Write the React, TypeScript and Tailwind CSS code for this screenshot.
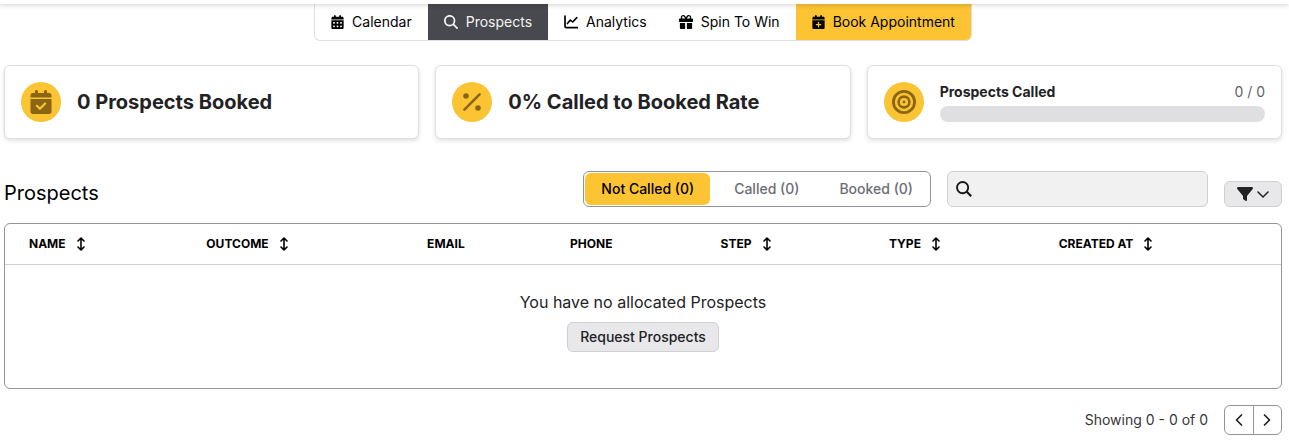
import { useState } from "react";
import clsx from "clsx";
import {
  FaCalendarCheck,
  FaCalendarDays,
  FaCalendarPlus,
  FaFilter,
  FaGift,
  FaMagnifyingGlass,
} from "react-icons/fa6";

const ChartIcon = () => (
  <svg viewBox="0 0 14 14" className="size-3.5" fill="none" stroke="currentColor">
    <path
      d="M1 1v10.2c0 .9.5 1.4 1.4 1.4h11.2"
      strokeWidth="1.7"
      strokeLinecap="round"
    />
    <path
      d="M3.4 8.6 6.4 5l2.3 2L12.8 2.6"
      strokeWidth="1.6"
      strokeLinecap="round"
      strokeLinejoin="round"
    />
  </svg>
);

const PercentIcon = () => (
  <svg viewBox="0 0 24 24" className="size-6" fill="currentColor">
    <path d="M4.4 19.6 19.6 4.4" stroke="currentColor" strokeWidth="2.6" strokeLinecap="round" />
    <circle cx="6" cy="6" r="2.8" />
    <circle cx="18" cy="18" r="2.8" />
  </svg>
);

const TargetIcon = () => (
  <svg viewBox="0 0 24 24" className="size-6" fill="none" stroke="currentColor" strokeWidth="2.8">
    <circle cx="12" cy="12" r="10.6" />
    <circle cx="12" cy="12" r="5.4" strokeWidth="2.6" />
    <circle cx="12" cy="12" r="1.4" fill="currentColor" stroke="none" />
  </svg>
);

const SortIcon = () => (
  <svg viewBox="0 0 8 14" className="h-3.5 w-2" fill="none" stroke="currentColor" strokeWidth="1.6">
    <path
      d="M4 1.2v11.6M1 4l3-3 3 3M1 10l3 3 3-3"
      strokeLinecap="round"
      strokeLinejoin="round"
    />
  </svg>
);

const SearchIcon = () => (
  <svg
    viewBox="0 0 16 16"
    className="size-4 shrink-0"
    fill="none"
    stroke="currentColor"
    strokeWidth="1.9"
  >
    <circle cx="6.6" cy="6.6" r="5.6" />
    <path d="m10.8 10.8 4.4 4.4" strokeWidth="2.2" />
  </svg>
);

const Chevron = ({ d, className }: { d: string; className: string }) => (
  <svg viewBox="0 0 12 12" className={className} fill="none" stroke="currentColor">
    <path d={d} strokeLinecap="round" strokeLinejoin="round" />
  </svg>
);

const navItems = [
  { label: "Calendar", icon: <FaCalendarDays className="w-[13px]" />, style: "" },
  { label: "Prospects", icon: <FaMagnifyingGlass />, style: "bg-[#48484f] text-[#f4f4f5]" },
  { label: "Analytics", icon: <ChartIcon />, style: "" },
  { label: "Spin To Win", icon: <FaGift />, style: "" },
  {
    label: "Book Appointment",
    icon: <FaCalendarPlus className="w-[13px]" />,
    style: "bg-[#fcc433]",
  },
];

const tabs = ["Not Called", "Called", "Booked"];

const columns = [
  { label: "Name", sortable: true, width: "w-[13.9%]" },
  { label: "Outcome", sortable: true, width: "w-[17.3%]" },
  { label: "Email", sortable: false, width: "w-[11.2%]" },
  { label: "Phone", sortable: false, width: "w-[11.8%]" },
  { label: "Step", sortable: true, width: "w-[13.2%]" },
  { label: "Type", sortable: true, width: "w-[13.3%]" },
  { label: "Created At", sortable: true, width: "w-[19.3%]" },
];

const StatCard = ({
  icon,
  children,
}: {
  icon: React.ReactNode;
  children: React.ReactNode;
}) => (
  <div className="flex flex-1 items-center gap-4 rounded-md border border-[#dfdfe2] bg-white p-4 shadow-[0_2px_4px_rgba(0,0,0,0.12)]">
    <div className="flex size-10 shrink-0 items-center justify-center rounded-full bg-[#fcc433] text-[#8a6614]">
      {icon}
    </div>
    {children}
  </div>
);

export default function App() {
  const [activeTab, setActiveTab] = useState("Not Called");
  const [search, setSearch] = useState("");

  return (
    <div className="bg-white font-['Inter',sans-serif] text-black">
      <header className="relative h-1 bg-white shadow-[0_1px_5px_rgba(0,0,0,0.2)]" />
      <nav className="flex justify-center pr-[7px] pl-1">
        <div className="flex overflow-hidden rounded-b-md border border-t-0 border-[#dfdfe2]">
          {navItems.map((item) => (
            <a
              key={item.label}
              href="#"
              className={clsx("flex items-center gap-2 px-4 py-2 text-sm", item.style)}
            >
              {item.icon}
              {item.label}
            </a>
          ))}
        </div>
      </nav>

      <main className="pt-6 pr-[7px] pb-1.5 pl-1">
        <section className="flex gap-4">
          <StatCard icon={<FaCalendarCheck className="size-6" />}>
            <p className="text-xl font-bold text-[#222225]">0 Prospects Booked</p>
          </StatCard>
          <StatCard icon={<PercentIcon />}>
            <p className="text-xl font-bold text-[#222225]">0% Called to Booked Rate</p>
          </StatCard>
          <StatCard icon={<TargetIcon />}>
            <div className="flex-1">
              <div className="flex justify-between pb-1 text-sm">
                <span className="font-bold text-[#222225]">Prospects Called</span>
                <span className="text-[#5f5f68]">0 / 0</span>
              </div>
              <div className="h-4 rounded-full bg-[#dfdfe2]" />
            </div>
          </StatCard>
        </section>

        <section className="mt-8 flex items-end gap-4">
          <h1 className="flex-1 text-xl">Prospects</h1>
          <div className="flex h-9 gap-2 rounded-md border border-[#93939f] p-px">
            {tabs.map((tab) => (
              <button
                key={tab}
                type="button"
                onClick={() => setActiveTab(tab)}
                className={clsx(
                  "rounded-md px-4 text-sm font-medium",
                  activeTab === tab ? "bg-[#fcc433] text-black" : "text-[#6c6c75]"
                )}
              >
                {tab} (0)
              </button>
            ))}
          </div>
          <label className="flex h-9 w-[261px] items-center gap-2 rounded-md border border-[#cfcfd3] bg-[#f1f1f1] px-2 text-[#18181b]">
            <SearchIcon />
            <input
              type="text"
              aria-label="Search"
              value={search}
              onChange={(e) => setSearch(e.target.value)}
              className="w-full bg-transparent text-sm outline-none"
            />
          </label>
          <button
            type="button"
            aria-label="Filter"
            className="flex h-[26px] items-center gap-1 rounded-md border border-[#cfcfd3] bg-[#e8e8eb] px-3 text-[#222225]"
          >
            <FaFilter className="size-4" />
            <Chevron d="m1 4 5 5 5-5" className="size-3 stroke-[1.5]" />
          </button>
        </section>

        <div className="mt-4 overflow-hidden rounded-md border border-[#93939f]">
          <table className="w-full text-left">
            <thead>
              <tr className="border-b border-[#cfcfd3]">
                {columns.map((col) => (
                  <th
                    key={col.label}
                    className={clsx("px-6 py-3 text-xs font-bold uppercase", col.width)}
                  >
                    {col.sortable ? (
                      <button type="button" className="flex items-center gap-[11px] uppercase">
                        {col.label}
                        <SortIcon />
                      </button>
                    ) : (
                      col.label
                    )}
                  </th>
                ))}
              </tr>
            </thead>
            <tbody>
              <tr>
                <td colSpan={columns.length} className="pt-[25px] pb-9 text-center">
                  <p className="text-base text-[#222225]">You have no allocated Prospects</p>
                  <button
                    type="button"
                    className="mt-2 rounded-md border border-[#cfcfd3] bg-[#e8e8eb] px-3 py-1 text-sm font-medium text-[#222225]"
                  >
                    Request Prospects
                  </button>
                </td>
              </tr>
            </tbody>
          </table>
        </div>

        <footer className="mt-4 flex items-center justify-end gap-4 text-sm text-[#36363b]">
          <span>Showing 0 - 0 of 0</span>
          <div className="flex h-[30px] w-[58px] divide-x divide-[#93939f] rounded-md border border-[#93939f] text-[#222225]">
            <button
              type="button"
              aria-label="Previous page"
              className="flex flex-1 items-center justify-center"
            >
              <Chevron d="M8.5 1 3.5 6l5 5" className="size-3 stroke-[1.7]" />
            </button>
            <button
              type="button"
              aria-label="Next page"
              className="flex flex-1 items-center justify-center"
            >
              <Chevron d="m3.5 1 5 5-5 5" className="size-3 stroke-[1.7]" />
            </button>
          </div>
        </footer>
      </main>
    </div>
  );
}
